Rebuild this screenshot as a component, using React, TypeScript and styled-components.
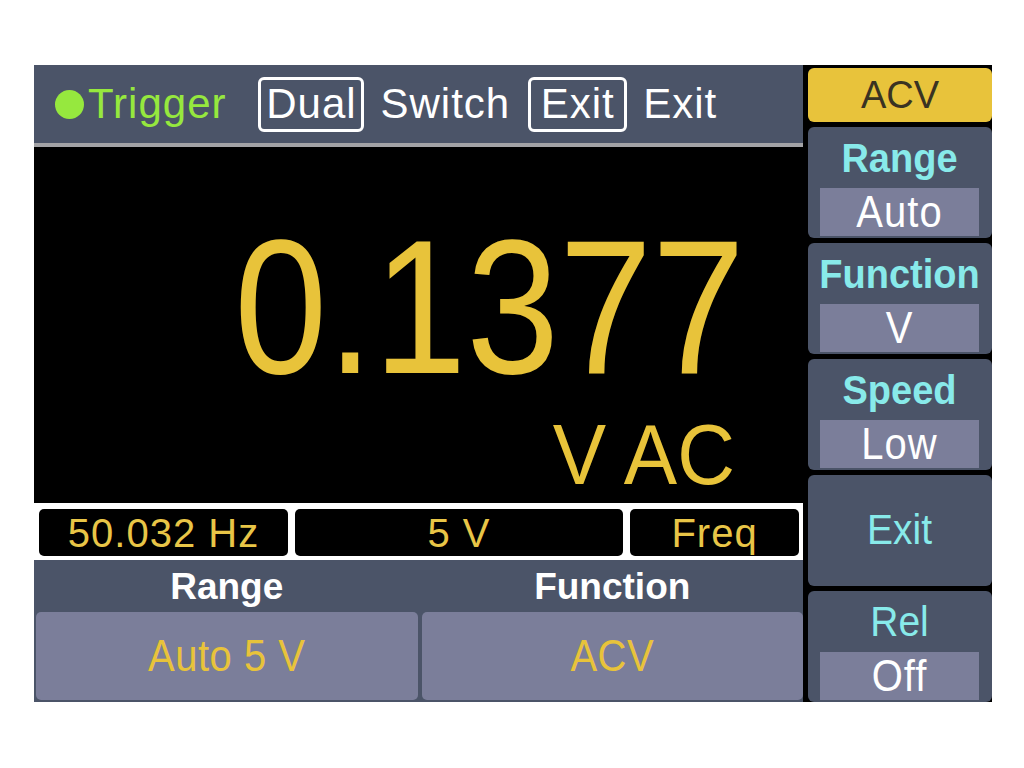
import React from 'react';
import styled, { createGlobalStyle } from 'styled-components';

const Global = createGlobalStyle`
  html, body { margin: 0; padding: 0; background: #ffffff; }
  body { font-family: "Liberation Sans", Arial, Helvetica, sans-serif; }
  * { box-sizing: border-box; }
`;

const Page = styled.div`
  padding: 65px 0 0 34px;
`;

const Device = styled.div`
  width: 958px;
  height: 637px;
  background: #000;
  display: grid;
  grid-template-columns: 769px 184px;
  column-gap: 5px;
`;

const LeftCol = styled.div`
  display: grid;
  grid-template-rows: 82px 356px 57px 142px;
`;

const Header = styled.div`
  background: #4b5468;
  border-bottom: 4px solid #a3a3a6;
  display: flex;
  align-items: center;
  padding-left: 21px;
  color: #ffffff;
  font-size: 42px;
  line-height: 1;
  white-space: nowrap;
`;

const Dot = styled.span`
  width: 29px;
  height: 29px;
  border-radius: 50%;
  background: #96e83e;
  margin-right: 4px;
  flex: none;
`;

const Trigger = styled.span`
  color: #96e83e;
  letter-spacing: 1px;
  margin-right: 32px;
`;

const KeyBox = styled.span<{ $width: number }>`
  width: ${(p) => p.$width}px;
  border: 3px solid #ffffff;
  border-radius: 6px;
  height: 55px;
  display: flex;
  align-items: center;
  justify-content: center;
  margin-right: 16px;
  flex: none;
`;

const HeaderText = styled.span<{ $gap?: number }>`
  margin-right: ${(p) => p.$gap ?? 0}px;
  letter-spacing: 1px;
`;

const Main = styled.div`
  display: flex;
  flex-direction: column;
  align-items: flex-end;
  padding: 85px 58px 0 0;
  color: #e8c33a;
`;

const Reading = styled.div`
  font-size: 167px;
  line-height: 1;
  height: 167px;
  transform: scaleY(1.14);
  transform-origin: 50% 84.65%;
`;

const Unit = styled.div`
  font-size: 80px;
  line-height: 1;
  height: 80px;
  margin-top: 18px;
  margin-right: 10px;
  transform: scaleY(1.06);
  transform-origin: 50% 84.65%;
`;

const Status = styled.div`
  background: #ffffff;
  display: grid;
  grid-template-columns: 249px 328px 1fr;
  column-gap: 7px;
  padding: 6px 4px 4px 5px;
`;

const Cell = styled.div`
  background: #000;
  border-radius: 5px;
  color: #e8c547;
  font-size: 40px;
  line-height: 1;
  letter-spacing: 1px;
  display: flex;
  align-items: center;
  justify-content: center;
`;

const Bottom = styled.div`
  background: #4b5468;
  display: grid;
  grid-template-columns: 1fr 1fr;
  grid-template-rows: 52px 1fr;
  column-gap: 4px;
  padding: 0 0 2px 2px;
`;

const Label = styled.div`
  color: #ffffff;
  font-weight: bold;
  font-size: 37px;
  line-height: 1;
  text-align: center;
  align-self: center;
`;

const ValueButton = styled.div`
  background: #7b7e9a;
  border-radius: 5px;
  color: #e8c33a;
  font-size: 40px;
  line-height: 1;
  letter-spacing: 0.5px;
  display: flex;
  align-items: center;
  justify-content: center;
`;

const RightCol = styled.div`
  display: grid;
  grid-template-columns: minmax(0, 1fr);
  grid-template-rows: 54px repeat(5, 1fr);
  row-gap: 5px;
  padding-top: 3px;
  min-width: 0;
`;

const ModeButton = styled.div`
  background: #e8c33b;
  border-radius: 6px;
  color: #3a3322;
  font-size: 38px;
  line-height: 1;
  display: flex;
  align-items: center;
  justify-content: center;
`;

const Panel = styled.div<{ $single?: boolean }>`
  background: #4b5468;
  border-radius: 6px;
  display: grid;
  grid-template-columns: minmax(0, 1fr);
  grid-template-rows: ${(p) => (p.$single ? '1fr' : '1fr 48px')};
  padding: 0 13px 2px 12px;
  min-width: 0;
`;

const PanelTitle = styled.div<{ $bold?: boolean }>`
  color: #88eaea;
  font-size: ${(p) => (p.$bold ? 38 : 39)}px;
  font-weight: ${(p) => (p.$bold ? 'bold' : 'normal')};
  line-height: 1;
  display: flex;
  align-items: center;
  justify-content: center;
  white-space: nowrap;
  min-width: 0;
  transform: scaleY(1.08);
`;

const PanelValue = styled.div`
  background: #7b7e9a;
  color: #ffffff;
  font-size: 40px;
  line-height: 1;
  letter-spacing: 1px;
  display: flex;
  align-items: center;
  justify-content: center;
`;

const ValueText = styled.span`
  display: inline-block;
  transform: scaleY(1.1);
`;

type PanelItem = { title: string; value?: string; bold?: boolean };

const panels: PanelItem[] = [
  { title: 'Range', value: 'Auto', bold: true },
  { title: 'Function', value: 'V', bold: true },
  { title: 'Speed', value: 'Low', bold: true },
  { title: 'Exit' },
  { title: 'Rel', value: 'Off' },
];

export default function App() {
  return (
    <>
      <Global />
      <Page>
        <Device>
          <LeftCol>
            <Header>
              <Dot />
              <Trigger>Trigger</Trigger>
              <KeyBox $width={106}>
                <HeaderText>Dual</HeaderText>
              </KeyBox>
              <HeaderText $gap={18}>Switch</HeaderText>
              <KeyBox $width={99}>
                <HeaderText>Exit</HeaderText>
              </KeyBox>
              <HeaderText>Exit</HeaderText>
            </Header>
            <Main>
              <Reading>0.1377</Reading>
              <Unit>V AC</Unit>
            </Main>
            <Status>
              <Cell>50.032 Hz</Cell>
              <Cell>5 V</Cell>
              <Cell>Freq</Cell>
            </Status>
            <Bottom>
              <Label>Range</Label>
              <Label>Function</Label>
              <ValueButton>
                <ValueText>Auto 5 V</ValueText>
              </ValueButton>
              <ValueButton>
                <ValueText>ACV</ValueText>
              </ValueButton>
            </Bottom>
          </LeftCol>
          <RightCol>
            <ModeButton>ACV</ModeButton>
            {panels.map((p) => (
              <Panel key={p.title} $single={!p.value}>
                <PanelTitle $bold={p.bold}>{p.title}</PanelTitle>
                {p.value && (
                  <PanelValue>
                    <ValueText>{p.value}</ValueText>
                  </PanelValue>
                )}
              </Panel>
            ))}
          </RightCol>
        </Device>
      </Page>
    </>
  );
}
